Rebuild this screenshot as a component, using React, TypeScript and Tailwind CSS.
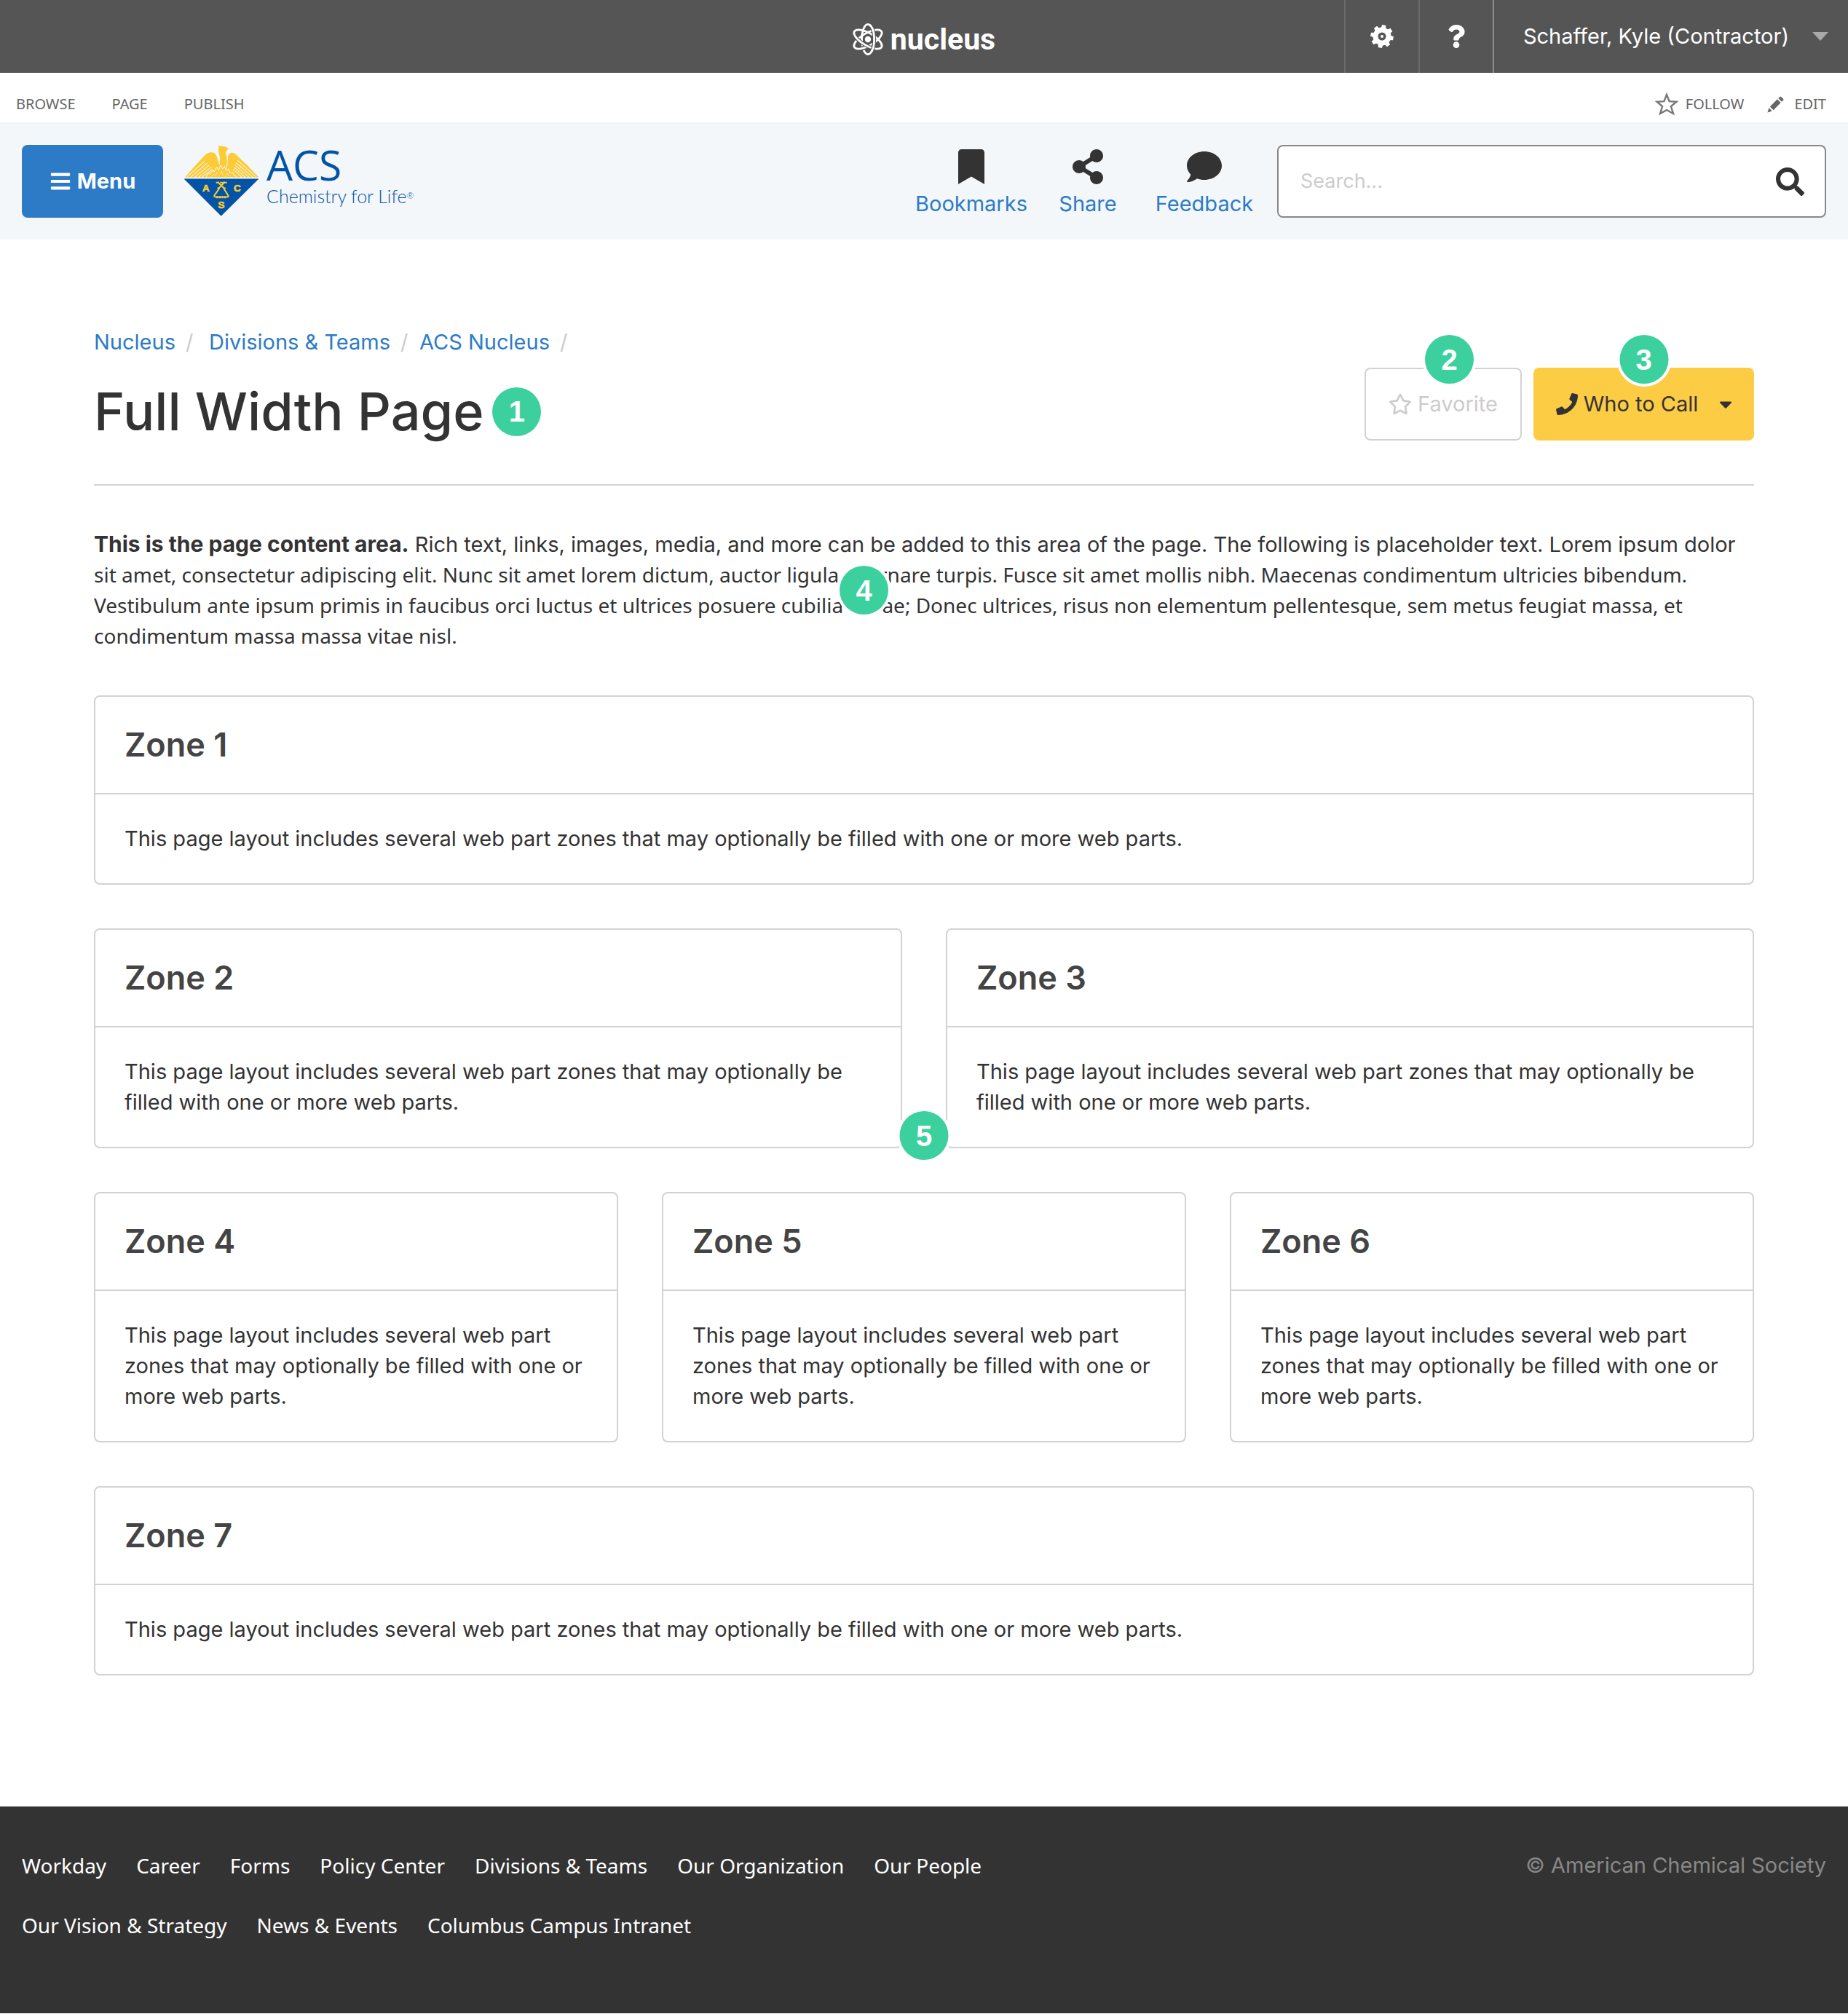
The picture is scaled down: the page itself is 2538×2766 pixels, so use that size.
import type { ReactNode } from "react";
import {
  FaBars,
  FaBookmark,
  FaCaretDown,
  FaComment,
  FaPhone,
  FaQuestion,
  FaRegStar,
  FaSearch,
  FaShareAlt,
} from "react-icons/fa";

const zoneText =
  "This page layout includes several web part zones that may optionally be filled with one or more web parts.";

const footerRows = [
  ["Workday", "Career", "Forms", "Policy Center", "Divisions & Teams", "Our Organization", "Our People"],
  ["Our Vision & Strategy", "News & Events", "Columbus Campus Intranet"],
];

function AtomIcon() {
  return (
    <svg viewBox="0 0 42 46" className="h-[46px] w-[42px]" fill="none" stroke="#fff" strokeWidth="2.8" aria-hidden="true">
      <ellipse cx="21" cy="23" rx="8.5" ry="20.6" />
      <g transform="rotate(60 21 23)">
        <path d="M21 1.500 A8.500 21.500 0 0 1 21 44.500" stroke="#555" strokeWidth="6" />
        <ellipse cx="21" cy="23" rx="8.5" ry="21.5" />
      </g>
      <g transform="rotate(-60 21 23)">
        <path d="M21 1.500 A8.500 21.500 0 0 0 21 44.500" stroke="#555" strokeWidth="5" />
        <ellipse cx="21" cy="23" rx="8.5" ry="21.5" />
      </g>
      <path d="M25 5 A8.500 20.600 0 0 1 27 38" stroke="#555" strokeWidth="5" />
      <path d="M23 3 A8.500 20.600 0 0 1 26 40" />
      <circle cx="21" cy="23" r="4.2" fill="#fff" stroke="none" />
    </svg>
  );
}

function GearIcon() {
  return (
    <svg viewBox="0 0 32 32" className="size-8" fill="#fff" aria-hidden="true">
      <circle cx="16" cy="16" r="9" fill="none" stroke="#fff" strokeWidth="7" />
      {[0, 45, 90, 135, 180, 225, 270, 315].map((angle) => (
        <path key={angle} d="M12.600 6 L13.400 0.300 H18.600 L19.400 6 Z" transform={`rotate(${angle + 10} 16 16)`} />
      ))}
      <circle cx="16" cy="16" r="2" />
    </svg>
  );
}

function AcsEmblem() {
  return (
    <svg viewBox="64 60 310 293" className="h-[98px] w-[104px] shrink-0" aria-hidden="true">
      <path
        d="M70 193 C98 160 122 134 150 104 C163 90 184 86 195 98 C203 108 204 122 210 138 C215 122 213 106 209 94 C205 83 210 74 208 61 C214 67 220 63 228 66 C238 67 244 70 250 80 C246 79 242 80 240 81 C246 84 240 86 237 88 C236 98 243 104 243 124 C246 108 246 100 253 95 C262 89 272 92 281 101 C312 130 342 160 371 191 L366 193 Z"
        fill="#fdcb35"
      />
      <g stroke="#f3f7fa" strokeWidth="3" fill="none" strokeLinecap="round">
        <path d="M80 190 L150 128" />
        <path d="M94 191 L160 136" />
        <path d="M110 192 L168 144" />
        <path d="M126 192 L176 152" />
        <path d="M141 191 L182 160" />
        <path d="M360 190 L286 124" />
        <path d="M347 192 L280 134" />
        <path d="M332 192 L276 144" />
        <path d="M316 192 L272 152" />
        <path d="M302 192 L268 160" />
        <path d="M203 106 C206 118 206 128 212 140" />
        <path d="M243 112 C242 126 246 138 240 156" />
        <path d="M158 190 L164 176 L172 180 L184 164 L190 170 L200 152 L208 164 L216 144 L224 158 L232 148 L238 164 L250 160 L254 174 L266 172 L270 184 L282 190" />
        <path d="M178 190 L186 180 L194 186 L204 172 M214 178 L220 168 L226 184 M236 190 L244 176 L252 188" strokeWidth="2" />
      </g>
      <path d="M65 199 H373 L218 352 Z" fill="#0354a6" />
      <g fill="#fdcb35" fontFamily="Liberation Sans" fontWeight="700" fontSize="40" textAnchor="middle" stroke="#fdcb35" strokeWidth="2">
        <text x="156" y="251">A</text>
        <text x="284" y="251">C</text>
        <text x="219" y="320">S</text>
      </g>
      <g stroke="#fdcb35" fill="none" strokeWidth="6">
        <path d="M197 215 H210 M214 215 H242" />
        <path d="M204 212 L232 240 M234 212 L206 240" />
        <path d="M203 236 L209 241 L190 268 Q188 274 196 274 H242 Q250 274 247 268 L230 241 L236 236" />
        <path d="M198 275 H240" strokeWidth="8" strokeDasharray="7 4" />
      </g>
    </svg>
  );
}

function PencilIcon() {
  return (
    <svg viewBox="0 0 24 24" className="size-[23px]" fill="#666" aria-hidden="true">
      <path d="M0.500 23.500 L2.500 17 L7 21.500 Z M4 15 L14.500 4.500 L19.500 9.500 L9 20 Z M16 3 L18 1 Q19 0 20 1 L23 4 Q24 5 23 6 L21 8 Z" />
    </svg>
  );
}

function StarOutline() {
  return (
    <svg viewBox="0 0 32 32" className="size-8" fill="none" stroke="#777" strokeWidth="2.4" aria-hidden="true">
      <path d="M16 3 L19.600 12.200 L29.500 12.800 L21.900 19 L25 29 L16 24 L7 29 L10.100 19 L2.500 12.800 L12.400 12.200 Z" />
    </svg>
  );
}

function Badge({ n, className }: { n: number; className?: string }) {
  return (
    <span
      className={`flex size-[67px] items-center justify-center rounded-full bg-[#3dd09f] font-['Liberation_Sans',sans-serif] text-[40px] leading-none font-bold text-white ring-4 ring-white ${className ?? ""}`}
    >
      {n}
    </span>
  );
}

function Zone({ n }: { n: number }) {
  return (
    <section className="rounded-lg border-2 border-[#d2d2d2] bg-white">
      <h2 className="border-b-2 border-[#d2d2d2] p-10 text-[45px] leading-[52px] font-semibold text-[#444]">Zone {n}</h2>
      <p className="p-10">{zoneText}</p>
    </section>
  );
}

function Action({ icon, label }: { icon: ReactNode; label: string }) {
  return (
    <a href="#" className="flex w-40 flex-col items-center text-[#2d7bc6]">
      <span className="flex h-[60px] shrink-0 items-center text-5xl text-[#333]">{icon}</span>
      {label}
    </a>
  );
}

export default function App() {
  return (
    <div className="bg-white font-[Inter,sans-serif] text-[29px] leading-[42px] text-[#333]">
      <div className="grid h-[100px] grid-cols-[1fr_auto_1fr] bg-[#555] text-white">
        <a href="#" className="col-start-2 flex items-center gap-2.5 pt-2 font-[Roboto,sans-serif] text-[41px] leading-none font-bold">
          <AtomIcon />
          nucleus
        </a>
        <div className="flex justify-end">
          <button aria-label="Settings" className="flex w-[102px] items-center justify-center border-l-2 border-[#6a6a6a]">
            <GearIcon />
          </button>
          <button aria-label="Help" className="flex w-[102px] items-center justify-center border-l-2 border-[#6a6a6a] text-[32px]">
            <FaQuestion />
          </button>
          <button className="flex items-center gap-8 border-l-2 border-[#909090] pr-[27px] pl-10">
            Schaffer, Kyle (Contractor)
            <svg viewBox="0 0 22 12" className="h-3 w-[22px]" fill="#a9a9a9" aria-hidden="true">
              <path d="M0 0 H22 L11 12 Z" />
            </svg>
          </button>
        </div>
      </div>

      <div className="flex h-[70px] items-center justify-between border-b-2 border-[#f3f3f3] px-[22px] pt-[18px] font-['Noto_Sans',sans-serif] text-[20px] leading-7 text-[#666]">
        <div className="flex gap-[50px]">
          <button>BROWSE</button>
          <button>PAGE</button>
          <button>PUBLISH</button>
        </div>
        <div className="flex gap-8 pr-2">
          <button className="flex items-center gap-2.5">
            <StarOutline />
            FOLLOW
          </button>
          <button className="flex items-center gap-3.5">
            <PencilIcon />
            EDIT
          </button>
        </div>
      </div>

      <header className="flex items-start bg-[#f3f7fa] px-[30px] pt-[29px] pb-[30px]">
        <button className="flex h-[100px] w-[194px] items-center justify-center gap-2 rounded-lg bg-[#2d7bc6] font-bold text-white">
          <FaBars className="size-[30px]" />
          Menu
        </button>
        <a href="#" className="ml-7 flex gap-2.5 text-[#0354a6]">
          <AcsEmblem />
          <span className="flex flex-col">
            <span className="font-['Open_Sans',sans-serif] text-[57px] leading-[54px]">ACS</span>
            <span className="font-[Lato,sans-serif] text-[25px] leading-8 font-light">
              Chemistry for Life<sup className="text-xs">®</sup>
            </span>
          </span>
        </a>
        <nav aria-label="Page tools" className="ml-auto flex h-[100px]">
          <Action icon={<FaBookmark />} label="Bookmarks" />
          <Action icon={<FaShareAlt />} label="Share" />
          <Action icon={<FaComment />} label="Feedback" />
        </nav>
        <form className="ml-5 flex h-[100px] w-[754px] items-center rounded-lg border-2 border-[#888] bg-white pr-7 pl-[30px]">
          <input
            aria-label="Search"
            placeholder="Search..."
            className="min-w-0 flex-1 text-[27px] outline-none placeholder:text-[#ccc]"
          />
          <button aria-label="Submit search" type="button" className="text-[39px]">
            <FaSearch />
          </button>
        </form>
      </header>

      <main className="mx-[129px] pt-[120px] pb-[180px]">
        <div className="flex items-start justify-between border-b-2 border-[#d2d2d2] pb-[52px]">
          <div>
            <nav aria-label="Breadcrumb" className="flex text-[#2d7bc6]">
              <a href="#">Nucleus</a>
              <span className="w-[46px] pl-3.5 text-[#ccc]">/</span>
              <a href="#">Divisions &amp; Teams</a>
              <span className="w-10 pl-3.5 text-[#ccc]">/</span>
              <a href="#">ACS Nucleus</a>
              <span className="pl-3.5 text-[#ccc]">/</span>
            </nav>
            <div className="mt-[26px] flex items-center gap-3">
              <h1 className="text-[72px] leading-[96px] font-medium">Full Width Page</h1>
              <Badge n={1} />
            </div>
          </div>
          <div className="mt-14 flex gap-4">
            <div className="relative">
              <button className="flex h-[100px] w-[216px] items-center justify-center gap-2 rounded-lg border-2 border-[#d2d2d2] text-[#ccc]">
                <FaRegStar className="size-8" />
                Favorite
              </button>
              <Badge n={2} className="absolute -top-[45px] right-[66px]" />
            </div>
            <div className="relative">
              <button className="flex h-[100px] w-[303px] items-center justify-center gap-2 rounded-lg bg-[#fdcc45] pl-1.5">
                <FaPhone className="size-[30px]" />
                Who to Call
                <FaCaretDown className="ml-4 size-7" />
              </button>
              <Badge n={3} className="absolute -top-[45px] left-1/2 -translate-x-1/2" />
            </div>
          </div>
        </div>

        <div className="relative mt-[60px]">
          <p>
            <strong className="text-[30px] leading-8">This is the page content area.</strong> Rich text, links, images,
            media, and more can be added to this area of the page. The following is placeholder text. Lorem ipsum
            dolor{" "}
            <span className="font-['Noto_Sans',sans-serif] text-[28px] leading-8">
              sit amet, consectetur adipiscing elit. Nunc sit amet lorem dictum, auctor ligula a, ornare turpis. Fusce
              sit amet mollis nibh. Maecenas condimentum ultricies bibendum. Vestibulum ante ipsum primis in faucibus
              orci luctus et ultrices posuere cubilia Curae; Donec ultrices, risus non elementum pellentesque, sem metus
              feugiat massa, et condimentum massa massa vitae nisl.
            </span>
          </p>
          <Badge n={4} className="absolute top-[50px] left-[1024px]" />
        </div>

        <div className="mt-[60px] flex flex-col gap-[60px]">
          <Zone n={1} />
          <div className="relative grid grid-cols-2 gap-[60px]">
            <Zone n={2} />
            <Zone n={3} />
            <Badge n={5} className="absolute -bottom-4 left-1/2 -translate-x-1/2" />
          </div>
          <div className="grid grid-cols-3 gap-[60px]">
            <Zone n={4} />
            <Zone n={5} />
            <Zone n={6} />
          </div>
          <Zone n={7} />
        </div>
      </main>

      <footer className="flex items-start justify-between bg-[#333] px-[30px] pt-10 pb-20 text-white">
        <nav aria-label="Footer" className="font-['Noto_Sans',sans-serif] text-[28px]">
          {footerRows.map((row) => (
            <div key={row[0]} className="flex gap-[41px] py-5">
              {row.map((label) => (
                <a key={label} href="#">
                  {label}
                </a>
              ))}
            </div>
          ))}
        </nav>
        <p className="py-5 text-[#888]">© American Chemical Society</p>
      </footer>
    </div>
  );
}
